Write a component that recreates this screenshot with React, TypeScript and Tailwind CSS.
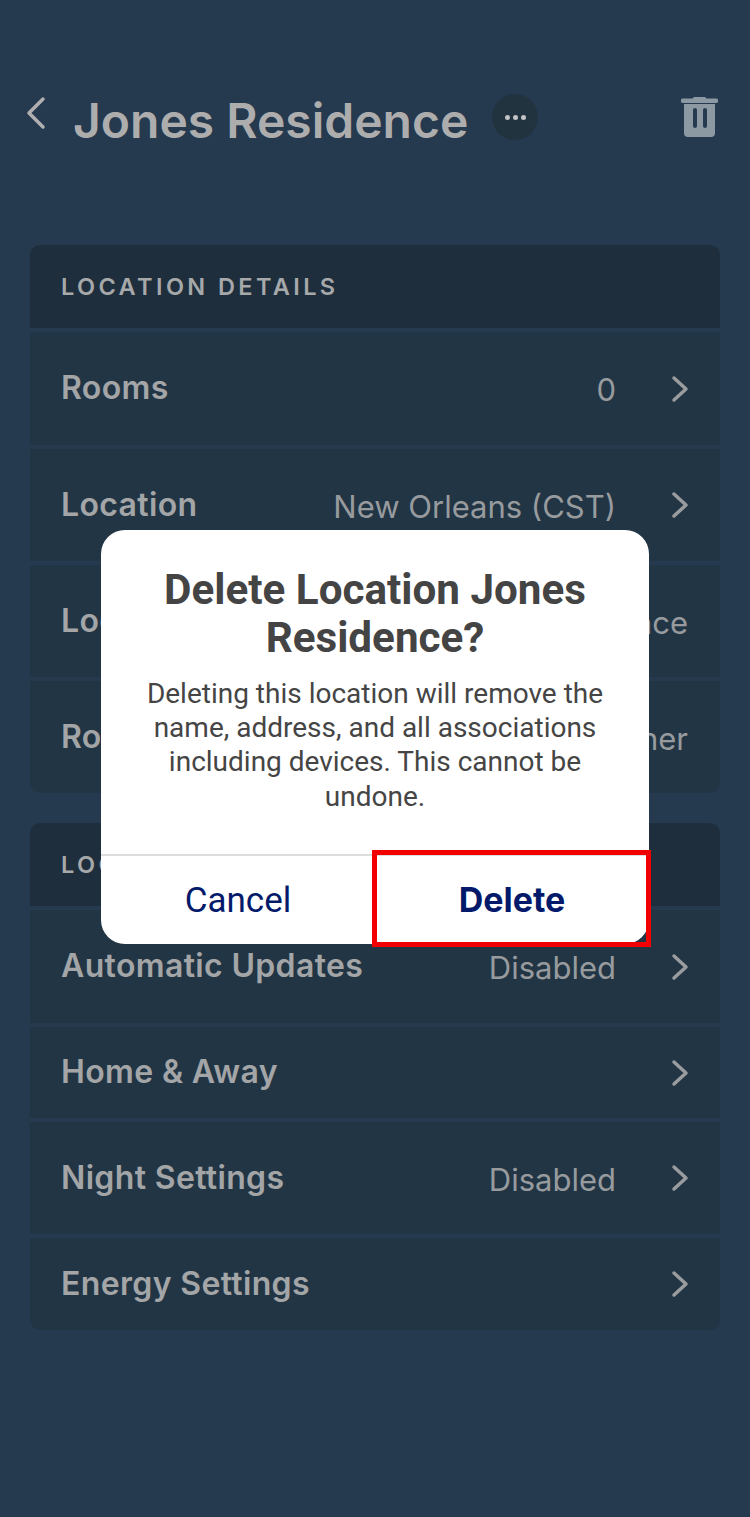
import React from 'react';

const Chevron = () => (
  <svg width="18" height="28" viewBox="0 0 18 28" fill="none" className="shrink-0">
    <path d="M3 3l12 11L3 25" stroke="#9a9c9e" strokeWidth="3.500" strokeLinecap="round" strokeLinejoin="round" />
  </svg>
);

type RowProps = { label: string; value?: string; height: string; radius?: string; noChevron?: boolean };

const Row = ({ label, value, height, radius = '', noChevron }: RowProps) => (
  <div className={`flex items-center justify-between bg-[#223545] pl-[31px] pr-[31px] ${height} ${radius}`}>
    <span className="mt-[-1px] text-[32px] font-semibold tracking-[0.35px] text-[#a3a5a7]">{label}</span>
    <div className="flex items-center">
      {value && <span className={`mt-[4px] text-[31px] text-[#989b9e] ${noChevron ? 'mr-[1px]' : 'mr-[55px]'}`}>{value}</span>}
      {!noChevron && <Chevron />}
    </div>
  </div>
);

const SectionHeader = ({ title }: { title: string }) => (
  <div className="flex h-[83px] items-center rounded-t-[10px] bg-[#1e2e3c] pl-[31px]">
    <span className="text-[23.500px] font-semibold tracking-[3.400px] text-[#a6a8aa]">{title}</span>
  </div>
);

export default function App() {
  return (
    <div className="relative h-[1517px] w-[750px] overflow-hidden bg-[#25394f] font-['Inter',sans-serif]">
      <header className="flex h-[245px] items-start pt-[91px] pl-[26px] pr-[32px]">
        <svg width="22" height="34" viewBox="0 0 22 34" fill="none" className="mt-[5px] shrink-0">
          <path d="M17 3L3 17L17 31" stroke="#b0b0b0" strokeWidth="3.500" strokeLinecap="round" strokeLinejoin="round" />
        </svg>
        <h1 className="ml-[25px] mt-[1px] text-[48px] leading-[58px] font-semibold text-[#adadad]">Jones Residence</h1>
        <div className="ml-[24px] mt-[3px] flex h-[46px] w-[46px] items-center justify-center gap-[3px] rounded-full bg-[#21333f]">
          <span className="h-[5px] w-[5px] rounded-full bg-[#c2c4c6]" />
          <span className="h-[5px] w-[5px] rounded-full bg-[#c2c4c6]" />
          <span className="h-[5px] w-[5px] rounded-full bg-[#c2c4c6]" />
        </div>
        <svg width="37" height="40" viewBox="0 0 37 40" className="ml-auto mt-[6px] shrink-0">
          <path fill="#8c99a3" fillRule="evenodd" d="M13 0h11l1.500 1.500H35a2 2 0 0 1 0 4.500H2a2 2 0 0 1 0-4.500h9.500zM3 7h31v29a4 4 0 0 1-4 4H7a4 4 0 0 1-4-4zM14 11a2 2 0 0 0-2 2v16a2 2 0 0 0 4 0V13a2 2 0 0 0-2-2zM24 11a2 2 0 0 0-2 2v16a2 2 0 0 0 4 0V13a2 2 0 0 0-2-2z" />
        </svg>
      </header>

      <main className="px-[30px]">
        <section className="flex flex-col gap-[4px]">
          <SectionHeader title="LOCATION DETAILS" />
          <Row label="Rooms" value="0" height="h-[113px]" />
          <Row label="Location" value="New Orleans (CST)" height="h-[112px]" />
          <Row label="Location Name" value="Jones Residence" height="h-[112px]" noChevron />
          <Row label="Role" value="Owner" height="h-[112px]" radius="rounded-b-[10px]" noChevron />
        </section>

        <section className="mt-[30px] flex flex-col gap-[4px]">
          <SectionHeader title="LOCATION SETTINGS" />
          <Row label="Automatic Updates" value="Disabled" height="h-[113px]" />
          <Row label="Home & Away" height="h-[91px]" />
          <Row label="Night Settings" value="Disabled" height="h-[112px]" />
          <Row label="Energy Settings" height="h-[92px]" radius="rounded-b-[10px]" />
        </section>
      </main>

      <div className="absolute left-[101px] top-[530px] flex h-[414px] w-[548px] flex-col rounded-[24px] bg-white font-['Roboto',sans-serif]">
        <div className="flex-1 px-[30px] pt-[36px] text-center">
          <h2 className="text-[42.200px] leading-[48px] font-bold text-[#444444]">Delete Location Jones Residence?</h2>
          <p className="mt-[15px] text-[28px] leading-[34.200px] text-[#454545]">
            Deleting this location will remove the name, address, and all associations including devices. This cannot be undone.
          </p>
        </div>
        <div className="flex h-[90px] border-t-2 border-[#dddddd]">
          <button className="flex w-[274px] items-center justify-center pt-[2px] text-[35px] text-[#031a6b]">Cancel</button>
          <button className="flex flex-1 items-center justify-center pb-[2px] font-['Inter',sans-serif] text-[34px] font-bold text-[#031a6b]">Delete</button>
        </div>
        <div className="absolute left-[271px] top-[320px] h-[97px] w-[279px] border-[5px] border-[#f20000]" />
      </div>
    </div>
  );
}
